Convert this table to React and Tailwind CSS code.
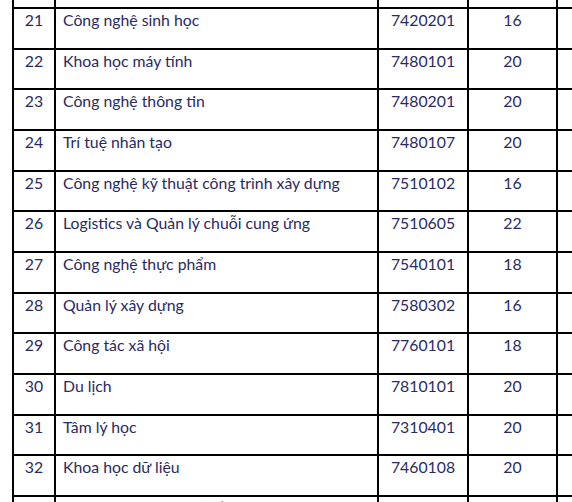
const rows = [
  ["21", "Công nghệ sinh học", "7420201", "16"],
  ["22", "Khoa học máy tính", "7480101", "20"],
  ["23", "Công nghệ thông tin", "7480201", "20"],
  ["24", "Trí tuệ nhân tạo", "7480107", "20"],
  ["25", "Công nghệ kỹ thuật công trình xây dựng", "7510102", "16"],
  ["26", "Logistics và Quản lý chuỗi cung ứng", "7510605", "22"],
  ["27", "Công nghệ thực phẩm", "7540101", "18"],
  ["28", "Quản lý xây dựng", "7580302", "16"],
  ["29", "Công tác xã hội", "7760101", "18"],
  ["30", "Du lịch", "7810101", "20"],
  ["31", "Tâm lý học", "7310401", "20"],
  ["32", "Khoa học dữ liệu", "7460108", "20"],
  ["33", "Công nghệ kỹ thuật kiến trúc", "7510101", "16"],
];

const Row = ({ row, className }) => (
  <div className={`flex border-b-2 border-black ${className}`}>
    <div className="w-[44px] shrink-0 border-x-2 border-black text-center">{row[0]}</div>
    <div className="w-[323px] shrink-0 border-r-2 border-black pl-[7px]">{row[1]}</div>
    <div className="w-[90px] shrink-0 border-r-2 border-black text-center">{row[2]}</div>
    <div className="w-[89px] shrink-0 border-r-2 border-black text-center">{row[3]}</div>
  </div>
);

export default function App() {
  return (
    <div
      className="h-[502px] w-[572px] overflow-hidden bg-white text-[15.8px] leading-[21px] text-[#2a2a62]"
      style={{ fontFamily: "Lato, 'Noto Sans', sans-serif" }}
    >
      <div className="ml-[12px]">
        <Row row={["", "", "", ""]} className="h-[9px] overflow-hidden" />
        {rows.map((r) => (
          <Row key={r[0]} row={r} className="h-[40.67px]" />
        ))}
      </div>
    </div>
  );
}
